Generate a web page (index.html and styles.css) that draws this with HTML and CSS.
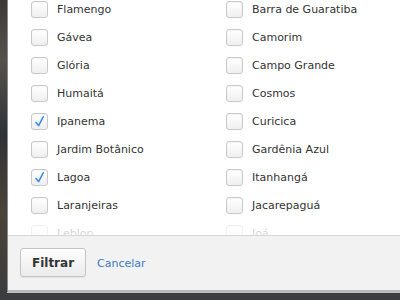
FILE: index.html
```html
<!DOCTYPE html>
<html lang="pt">
<head>
    <meta charset="UTF-8">
    <title>Filtrar bairros</title>
    <link rel="stylesheet" href="styles.css">
</head>
<body>
    <div class="backdrop">
        <div class="modal">
            <div class="list-wrap">
                <div class="list">
                    <div class="col">
                        <label class="item"><span class="box"></span>Flamengo</label>
                        <label class="item"><span class="box"></span>Gávea</label>
                        <label class="item"><span class="box"></span>Glória</label>
                        <label class="item"><span class="box"></span>Humaitá</label>
                        <label class="item"><span class="box checked"><svg viewBox="0 0 17 17" width="17" height="17"><path d="M5 9.5 L7.6 12.6 L12.2 3.8" fill="none" stroke="#3d8ee6" stroke-width="1.6" stroke-linecap="round" stroke-linejoin="round"/></svg></span>Ipanema</label>
                        <label class="item"><span class="box"></span>Jardim Botânico</label>
                        <label class="item"><span class="box checked"><svg viewBox="0 0 17 17" width="17" height="17"><path d="M5 9.5 L7.6 12.6 L12.2 3.8" fill="none" stroke="#3d8ee6" stroke-width="1.6" stroke-linecap="round" stroke-linejoin="round"/></svg></span>Lagoa</label>
                        <label class="item"><span class="box"></span>Laranjeiras</label>
                        <label class="item"><span class="box"></span>Leblon</label>
                    </div>
                    <div class="col">
                        <label class="item"><span class="box"></span>Barra de Guaratiba</label>
                        <label class="item"><span class="box"></span>Camorim</label>
                        <label class="item"><span class="box"></span>Campo Grande</label>
                        <label class="item"><span class="box"></span>Cosmos</label>
                        <label class="item"><span class="box"></span>Curicica</label>
                        <label class="item"><span class="box"></span>Gardênia Azul</label>
                        <label class="item"><span class="box"></span>Itanhangá</label>
                        <label class="item"><span class="box"></span>Jacarepaguá</label>
                        <label class="item"><span class="box"></span>Joá</label>
                    </div>
                </div>
                <div class="fade"></div>
            </div>
            <div class="footer">
                <button type="button" class="btn">Filtrar</button>
                <a href="#" class="cancel">Cancelar</a>
            </div>
        </div>
    </div>
</body>
</html>
```

FILE: styles.css
```css
html, body {
    margin: 0;
    padding: 0;
    height: 100%;
}
body {
    font-family: "DejaVu Sans", sans-serif;
    background: linear-gradient(180deg, #3b3a38 0%, #55524d 20%, #2f3236 45%, #4a4438 70%, #3a3c40 100%);
    overflow: hidden;
}
.backdrop {
    padding-left: 7px;
    width: 393px;
}
.modal {
    background-color: #FFFFFF;
    border-left: 1px solid #8a8a8a;
    box-shadow: 0 1px 0 #bdbdbd;
}
.list-wrap {
    position: relative;
    height: 235px;
    overflow: hidden;
}
.list {
    display: grid;
    grid-template-columns: 195px 1fr;
    padding-left: 23px;
}
.item {
    display: flex;
    align-items: center;
    height: 17px;
    margin-bottom: 10px;
    font-size: 11px;
    color: #333333;
    padding-top: 1px;
}
.box {
    width: 15px;
    height: 15px;
    border: 1px solid #c9c9c9;
    border-radius: 3px;
    background: linear-gradient(180deg, #ffffff 0%, #efefef 100%);
    box-shadow: inset 0 1px 1px rgba(0, 0, 0, 0.04);
    margin-right: 9px;
    margin-top: -1px;
    position: relative;
    flex-shrink: 0;
}
.box svg {
    position: absolute;
    left: -1px;
    top: -1px;
}
.fade {
    position: absolute;
    left: 0;
    right: 0;
    bottom: 0;
    height: 20px;
    background: linear-gradient(180deg, rgba(255, 255, 255, 0) 0%, rgba(255, 255, 255, 0.7) 50%, rgba(255, 255, 255, 0.82) 100%);
}
.footer {
    background-color: #f2f2f2;
    border-top: 1px solid #d6d6d6;
    border-bottom: 2px solid #b8b8b8;
    height: 54px;
    display: flex;
    align-items: center;
    padding-left: 12px;
    box-sizing: content-box;
}
.btn {
    width: 66px;
    height: 29px;
    font-family: "DejaVu Sans", sans-serif;
    font-size: 12px;
    font-weight: bold;
    color: #333333;
    border: 1px solid #c4c4c4;
    border-radius: 3px;
    background: linear-gradient(180deg, #fdfdfd 0%, #ebebeb 100%);
    box-shadow: 0 1px 1px rgba(0, 0, 0, 0.06);
    margin-top: -1px;
}
.cancel {
    font-size: 11px;
    color: #3c78c3;
    text-decoration: none;
    margin-left: 11px;
}
```
